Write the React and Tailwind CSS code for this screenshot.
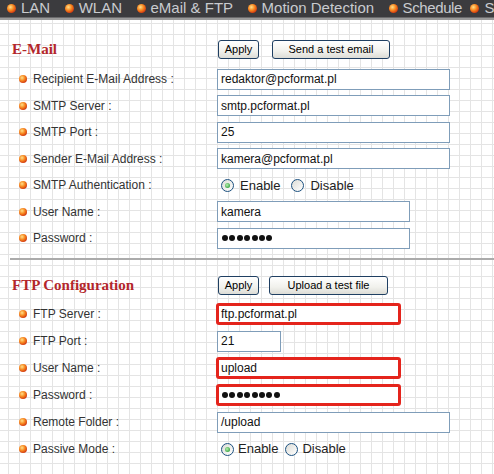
import React from "react";

function Bullet({ size = "w-[8px] h-[8px]" }) {
  return (
    <span
      className={`${size} inline-block shrink-0 rounded-full bg-[radial-gradient(circle_at_38%_35%,#ffe08a_0%,#f7871f_40%,#d2380f_75%,#9a2008_100%)]`}
    />
  );
}

function NavItem({ children, extra = "" }) {
  return (
    <div className={`flex items-center gap-[5px] ${extra}`}>
      <Bullet size="w-[9px] h-[9px]" />
      <span>{children}</span>
    </div>
  );
}

function Btn({ children, w }) {
  return (
    <div
      className={`${w} h-[19px] flex items-center justify-center rounded-[3px] border border-[#1f3f62] bg-[linear-gradient(#ffffff,#f1f1ec_60%,#dcdcd6)] text-[11px] text-black font-['Liberation_Sans',Arial,sans-serif]`}
    >
      {children}
    </div>
  );
}

function Field({ w, children }) {
  return (
    <div
      className={`${w} h-[21px] flex items-center border border-[#7f9db9] bg-white pl-[3px] text-[12px] text-[#111] font-['Liberation_Sans',Arial,sans-serif]`}
    >
      {children}
    </div>
  );
}

function RedField({ w, children }) {
  return (
    <div
      className={`${w} h-[22px] -ml-[1px] flex items-center rounded-[3px] border-[3px] border-[#e4241c] bg-white pl-[2px] text-[12px] text-[#111] font-['Liberation_Sans',Arial,sans-serif]`}
    >
      {children}
    </div>
  );
}

function Dots({ n }) {
  return (
    <div className="flex items-center gap-[1.4px] pl-[1px]">
      {Array.from({ length: n }).map((_, i) => (
        <span key={i} className="w-[6px] h-[6px] rounded-full bg-[#111]" />
      ))}
    </div>
  );
}

function Radio({ checked }) {
  return (
    <span className="w-[13px] h-[13px] shrink-0 rounded-full border border-[#1c5180] bg-[linear-gradient(135deg,#dcdcd6,#ffffff)] flex items-center justify-center">
      {checked && (
        <span className="w-[5px] h-[5px] rounded-full bg-[radial-gradient(circle_at_40%_40%,#b8f0b0,#3fa84a_70%)]" />
      )}
    </span>
  );
}

function RadioRow({ tight }) {
  return (
    <div className="flex items-center text-[13px] text-[#222] font-['Liberation_Sans',Arial,sans-serif] pl-[4px]">
      <Radio checked />
      <span className={tight ? "ml-[4px]" : "ml-[6px]"}>Enable</span>
      <span className={tight ? "ml-[7px]" : "ml-[11px]"}>
        <Radio />
      </span>
      <span className={tight ? "ml-[4px]" : "ml-[6px]"}>Disable</span>
    </div>
  );
}

function Row({ label, h, children }) {
  return (
    <div className={`flex items-center ${h}`}>
      <div className="w-[217px] shrink-0 flex items-center pl-[19px]">
        <Bullet />
        <span className="ml-[6px] text-[12px] text-[#333] font-['Liberation_Sans',Arial,sans-serif]">
          {label}
        </span>
      </div>
      <div className="flex items-center">{children}</div>
    </div>
  );
}

export default function App() {
  return (
    <div className="w-[494px] h-[474px] overflow-hidden bg-white">
      <div className="h-[17px] bg-[#3b3b3e] flex items-center pl-[7px] gap-[14.5px] text-[15px] text-[#c9cbcf] whitespace-nowrap font-['Liberation_Sans',Arial,sans-serif]">
        <NavItem>LAN</NavItem>
        <NavItem>WLAN</NavItem>
        <NavItem>eMail &amp; FTP</NavItem>
        <NavItem>Motion Detection</NavItem>
        <NavItem extra="tracking-[-0.4px]">Schedule</NavItem>
        <NavItem extra="-ml-[6px]">S</NavItem>
      </div>
      <div className="h-[1px] bg-[#6a6a6c]" />
      <div className="h-[2px] bg-[#9a9a9a]" />
      <div className="h-[455px] bg-white [background-image:linear-gradient(#e4e4e4_1px,transparent_1px),linear-gradient(90deg,#e4e4e4_1px,transparent_1px)] [background-size:11px_11px] [background-position:8px_3px]">
        <div className="pt-[20px]">
          <div className="flex items-center h-[19px]">
            <div className="w-[218px] pl-[12px] text-[15px] font-bold text-[#b3262b] font-['Liberation_Serif','Times_New_Roman',serif]">
              E-Mail
            </div>
            <Btn w="w-[41px]">Apply</Btn>
            <div className="w-[13px]" />
            <Btn w="w-[118px]">Send a test email</Btn>
          </div>
          <div className="mt-[7px]">
            <Row label="Recipient E-Mail Address :" h="h-[26.5px]">
              <Field w="w-[233px]">redaktor@pcformat.pl</Field>
            </Row>
            <Row label="SMTP Server :" h="h-[26.5px]">
              <Field w="w-[233px]">smtp.pcformat.pl</Field>
            </Row>
            <Row label="SMTP Port :" h="h-[26.5px]">
              <Field w="w-[233px]">25</Field>
            </Row>
            <Row label="Sender E-Mail Address :" h="h-[26.5px]">
              <Field w="w-[233px]">kamera@pcformat.pl</Field>
            </Row>
            <Row label="SMTP Authentication :" h="h-[26.5px]">
              <RadioRow />
            </Row>
            <Row label="User Name :" h="h-[26.5px]">
              <Field w="w-[193px]">kamera</Field>
            </Row>
            <Row label="Password :" h="h-[26.5px]">
              <Field w="w-[193px]">
                <Dots n={7} />
              </Field>
            </Row>
          </div>
          <div className="mt-[6px] ml-[10px] h-[2px] bg-[#ababab]" />
          <div className="mt-[16px] flex items-center h-[19px]">
            <div className="w-[218px] pl-[12px] text-[15px] font-bold text-[#b3262b] font-['Liberation_Serif','Times_New_Roman',serif]">
              FTP Configuration
            </div>
            <Btn w="w-[41px]">Apply</Btn>
            <div className="w-[10px]" />
            <Btn w="w-[119px]">Upload a test file</Btn>
          </div>
          <div className="mt-[6px]">
            <Row label="FTP Server :" h="h-[27px]">
              <RedField w="w-[185px]">ftp.pcformat.pl</RedField>
            </Row>
            <Row label="FTP Port :" h="h-[27px]">
              <Field w="w-[64px]">21</Field>
            </Row>
            <Row label="User Name :" h="h-[27px]">
              <RedField w="w-[185px]">upload</RedField>
            </Row>
            <Row label="Password :" h="h-[27px]">
              <RedField w="w-[185px]">
                <Dots n={8} />
              </RedField>
            </Row>
            <Row label="Remote Folder :" h="h-[27px]">
              <Field w="w-[233px]">/upload</Field>
            </Row>
            <Row label="Passive Mode :" h="h-[27px]">
              <RadioRow tight />
            </Row>
          </div>
        </div>
      </div>
    </div>
  );
}
